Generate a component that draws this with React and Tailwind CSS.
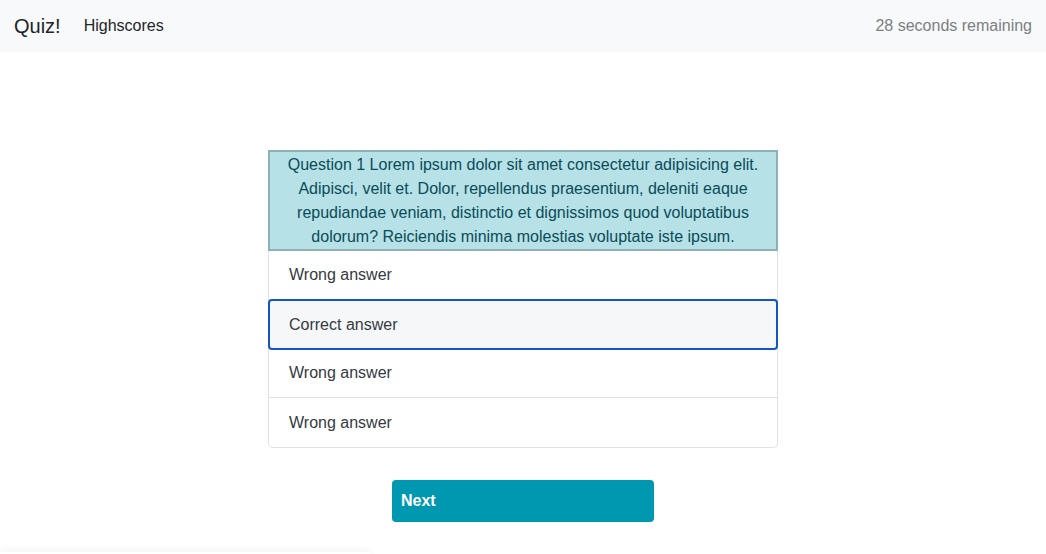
import React from 'react';

const answers = [
  { text: 'Wrong answer', active: false },
  { text: 'Correct answer', active: true },
  { text: 'Wrong answer', active: false },
  { text: 'Wrong answer', active: false },
];

const App = () => {
  return (
    <div className="w-full h-screen bg-white overflow-hidden relative" style={{ fontFamily: '"Liberation Sans", Arial, sans-serif' }}>
      <nav className="h-[52px] bg-[#f8f9fa] flex items-center px-[14px]">
        <span className="text-[20px] text-[#212529] mr-[23px]">Quiz!</span>
        <a className="text-[16px] text-[#212529]">Highscores</a>
        <span className="ml-auto text-[16px] text-[#7b7f83]">28 seconds remaining</span>
      </nav>
      <div className="flex flex-col items-center pt-[98px]">
        <div className="w-[510px]">
          <div className="bg-[#b6e1e7] border-2 border-[#8fb1b6] text-[#0b4b57] text-[16px] leading-[24px] text-center px-2 pt-[1px]">
            Question 1 Lorem ipsum dolor sit amet consectetur adipisicing elit. Adipisci, velit et. Dolor, repellendus praesentium, deleniti eaque repudiandae veniam, distinctio et dignissimos quod voluptatibus dolorum? Reiciendis minima molestias voluptate iste ipsum.
          </div>
          <ul className="border border-[#dee2e6] border-t-0 rounded-b-[5px]">
            {answers.map((a, i) => (
              <li
                key={i}
                className={
                  a.active
                    ? 'h-[51px] -mx-px -my-px relative flex items-center px-[19px] text-[16px] text-[#343a40] bg-[#f6f7f9] border-2 border-[#1456c0] rounded-[4px]'
                    : 'h-[49px] flex items-center px-5 text-[16px] text-[#343a40] border-b border-[#dee2e6] last:border-b-0'
                }
              >
                {a.text}
              </li>
            ))}
          </ul>
        </div>
        <button className="mt-[32px] w-[262px] h-[42px] bg-[#0097b0] rounded-[4px] text-white text-[16px] font-semibold text-left px-[9px]">
          Next
        </button>
      </div>
      <div className="absolute left-0 bottom-[-8px] w-[370px] h-[10px] shadow-[0_-2px_8px_rgba(0,0,0,0.05)]"></div>
    </div>
  );
};

export default App;
